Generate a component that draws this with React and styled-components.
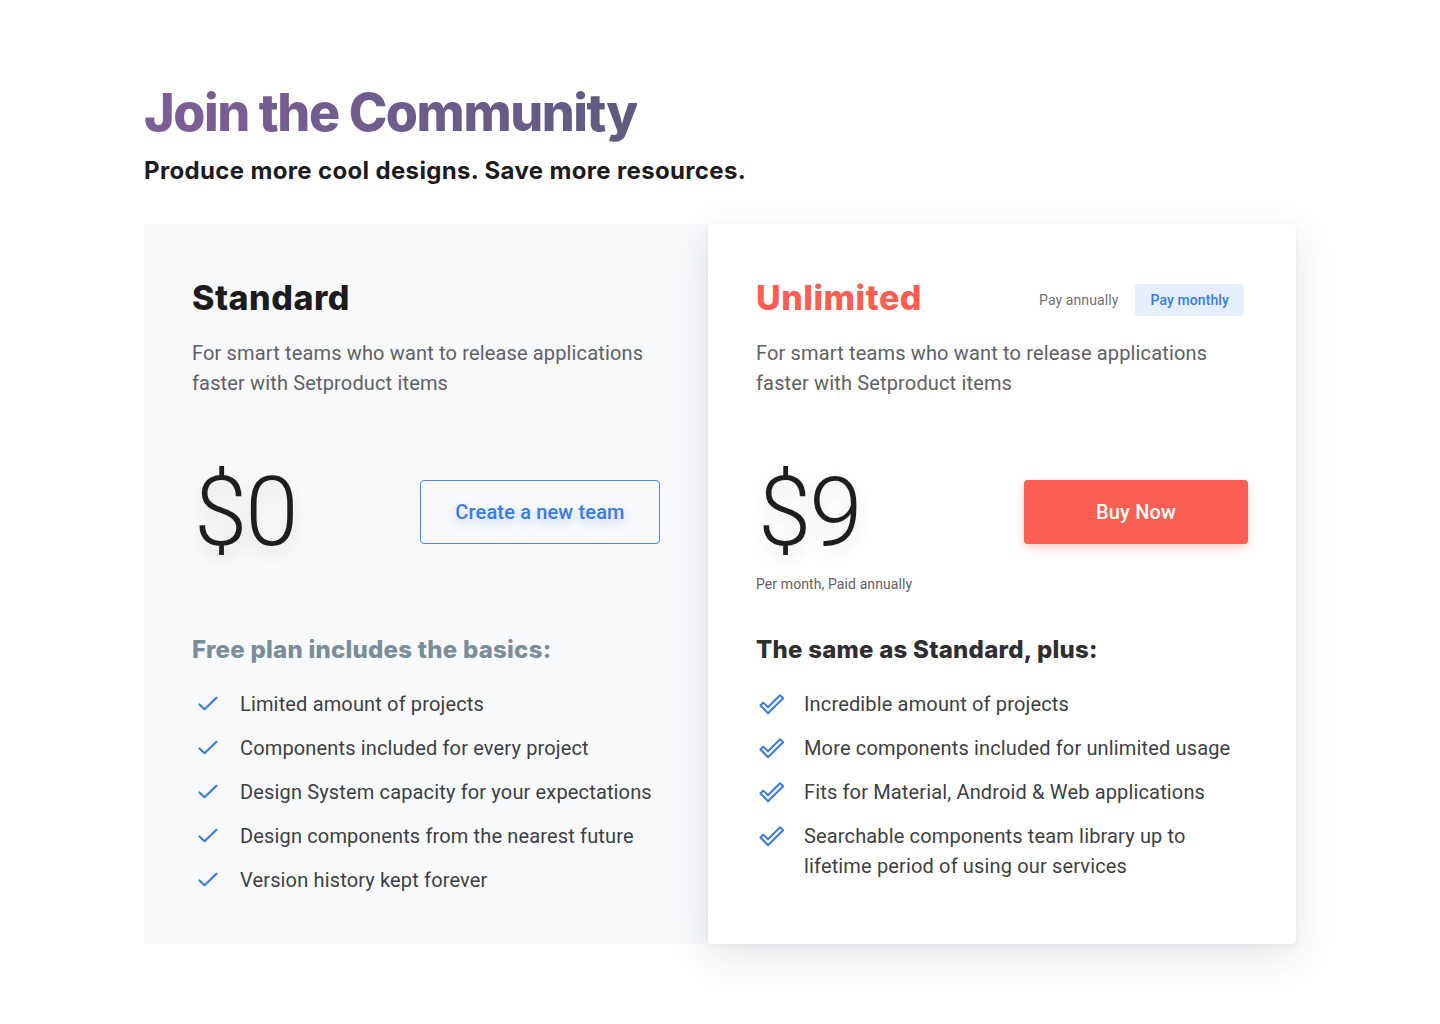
import React from "react";
import styled, { createGlobalStyle } from "styled-components";

const Global = createGlobalStyle`
  html, body { margin: 0; padding: 0; background: #ffffff; }
  body { font-family: Roboto, "Liberation Sans", sans-serif; -webkit-font-smoothing: antialiased; }
  * { box-sizing: border-box; }
`;

const HEAD = `Inter, "Open Sans", "Liberation Sans", sans-serif`;

const Page = styled.div`
  width: 1440px;
  min-height: 1024px;
  padding: 77px 144px 0 144px;
`;

const Title = styled.h1`
  margin: 0;
  font-family: ${HEAD};
  font-weight: 800;
  font-size: 52px;
  line-height: 72px;
  letter-spacing: -1.45px;
  background: linear-gradient(90deg, #7d5e97 0%, #5f5b80 100%);
  -webkit-background-clip: text;
  background-clip: text;
  color: transparent;
  display: inline-block;
`;

const Subtitle = styled.p`
  margin: 6px 0 0 0;
  font-family: ${HEAD};
  font-weight: 700;
  font-size: 24px;
  line-height: 32px;
  letter-spacing: 0.35px;
  color: #1c1c1e;
`;

const Cards = styled.div`
  display: flex;
  margin-top: 37px;
`;

const Card = styled.section`
  width: ${(p) => p.$w}px;
  height: 720px;
  padding: 50px 48px 0 48px;
  background: ${(p) => (p.$featured ? "#ffffff" : "#f7f9fb")};
  border-radius: 4px;
  box-shadow: ${(p) =>
    p.$featured ? "0 12px 40px rgba(30, 40, 60, 0.12), 0 2px 6px rgba(30,40,60,0.05)" : "none"};
  position: relative;
  z-index: ${(p) => (p.$featured ? 1 : 0)};
`;

const HeaderRow = styled.div`
  display: flex;
  align-items: center;
  justify-content: space-between;
  height: 48px;
`;

const PlanName = styled.h2`
  margin: 0;
  font-family: ${HEAD};
  font-weight: 800;
  font-size: 34px;
  line-height: 48px;
  letter-spacing: 0.5px;
  color: ${(p) => p.$color};
`;

const Toggle = styled.div`
  display: flex;
  align-items: center;
  gap: 17px;
  margin-right: 4px;
  margin-top: 4px;
`;

const ToggleOption = styled.span`
  font-family: Roboto, sans-serif;
  font-size: 14px;
  line-height: 32px;
  height: 32px;
  letter-spacing: 0.1px;
  padding: 0 ${(p) => (p.$active ? "15px" : "0")};
  border-radius: 4px;
  font-weight: ${(p) => (p.$active ? 500 : 400)};
  color: ${(p) => (p.$active ? "#3a7be0" : "#6f7378")};
  background: ${(p) => (p.$active ? "#e4eefc" : "transparent")};
`;

const Description = styled.p`
  margin: 16px 0 0 0;
  font-size: 20px;
  line-height: 30px;
  letter-spacing: 0.15px;
  color: #5f6166;
  font-weight: 400;
`;

const PriceBlock = styled.div`
  margin-top: 82px;
  height: 114px;
`;

const PriceRow = styled.div`
  display: flex;
  align-items: center;
  justify-content: space-between;
  height: 64px;
`;

const Price = styled.div`
  font-family: Roboto, sans-serif;
  font-weight: 300;
  font-size: 96px;
  line-height: 64px;
  color: #1e1e1e;
  letter-spacing: -2px;
  margin-left: 2px;
  text-shadow: 0 8px 18px rgba(0, 0, 0, 0.12);
`;

const OutlineButton = styled.button`
  width: 240px;
  height: 64px;
  border: 1px solid #4a84e2;
  border-radius: 4px;
  background: transparent;
  font-family: Roboto, sans-serif;
  font-weight: 500;
  font-size: 20px;
  letter-spacing: 0.15px;
  color: #3a7be0;
  text-shadow: 0 4px 10px rgba(58, 123, 224, 0.3);
`;

const SolidButton = styled.button`
  width: 224px;
  height: 64px;
  border: none;
  border-radius: 4px;
  background: #fa5d51;
  font-family: Roboto, sans-serif;
  font-weight: 500;
  font-size: 20px;
  letter-spacing: 0.15px;
  color: #ffffff;
  box-shadow: 0 4px 10px rgba(250, 93, 81, 0.3);
`;

const PriceNote = styled.div`
  margin-top: 30px;
  font-size: 14px;
  line-height: 20px;
  letter-spacing: 0.1px;
  color: #5f6166;
`;

const FeatureHeading = styled.h3`
  margin: 40px 0 0 0;
  font-family: ${HEAD};
  font-weight: 800;
  font-size: 24px;
  line-height: 32px;
  letter-spacing: 0.25px;
  color: ${(p) => p.$color};
`;

const List = styled.ul`
  list-style: none;
  margin: 23px 0 0 0;
  padding: 0;
  display: flex;
  flex-direction: column;
  gap: 14px;
`;

const Item = styled.li`
  display: flex;
  align-items: flex-start;
  font-size: 20px;
  line-height: 30px;
  letter-spacing: 0.15px;
  color: #3d3f43;
`;

const IconBox = styled.span`
  flex: 0 0 ${(p) => p.$w}px;
  height: 30px;
  display: flex;
  align-items: center;
  padding-left: ${(p) => p.$pl}px;
`;

const Check = () => (
  <svg width="20" height="16" viewBox="0 0 20 16" fill="none">
    <path d="M1.5 8.5 L6.5 13.2 L18.5 1.8" stroke="#3a7be0" strokeWidth="2.2" strokeLinecap="round" strokeLinejoin="round" />
  </svg>
);

const DoubleCheck = () => (
  <svg width="26" height="22" viewBox="0 0 26 22" fill="none">
    <path
      d="M1.5 12.5 L4.3 9.6 L9 14.2 L21 2.2 L24.2 5.2 L9 20.3 Z"
      stroke="#3a7be0"
      strokeWidth="2"
      strokeLinejoin="round"
    />
  </svg>
);

const standardItems = [
  "Limited amount of projects",
  "Components included for every project",
  "Design System capacity for your expectations",
  "Design components from the nearest future",
  "Version history kept forever",
];

const unlimitedItems = [
  "Incredible amount of projects",
  "More components included for unlimited usage",
  "Fits for Material, Android & Web applications",
  <>Searchable components team library up to<br />lifetime period of using our services</>,
];

export default function App() {
  return (
    <>
      <Global />
      <Page>
        <Title>Join the Community</Title>
        <Subtitle>Produce more cool designs. Save more resources.</Subtitle>
        <Cards>
          <Card $w={564}>
            <HeaderRow>
              <PlanName $color="#1c1c1e">Standard</PlanName>
            </HeaderRow>
            <Description>
              For smart teams who want to release applications
              <br />
              faster with Setproduct items
            </Description>
            <PriceBlock>
              <PriceRow>
                <Price>$0</Price>
                <OutlineButton>Create a new team</OutlineButton>
              </PriceRow>
            </PriceBlock>
            <FeatureHeading $color="#7a8d98">Free plan includes the basics:</FeatureHeading>
            <List>
              {standardItems.map((t, i) => (
                <Item key={i}>
                  <IconBox $w={48} $pl={6}>
                    <Check />
                  </IconBox>
                  {t}
                </Item>
              ))}
            </List>
          </Card>
          <Card $w={588} $featured>
            <HeaderRow>
              <PlanName $color="#fa5d51">Unlimited</PlanName>
              <Toggle>
                <ToggleOption>Pay annually</ToggleOption>
                <ToggleOption $active>Pay monthly</ToggleOption>
              </Toggle>
            </HeaderRow>
            <Description>
              For smart teams who want to release applications
              <br />
              faster with Setproduct items
            </Description>
            <PriceBlock>
              <PriceRow>
                <Price>$9</Price>
                <SolidButton>Buy Now</SolidButton>
              </PriceRow>
              <PriceNote>Per month, Paid annually</PriceNote>
            </PriceBlock>
            <FeatureHeading $color="#2e2e30">The same as Standard, plus:</FeatureHeading>
            <List>
              {unlimitedItems.map((t, i) => (
                <Item key={i}>
                  <IconBox $w={48} $pl={3}>
                    <DoubleCheck />
                  </IconBox>
                  <span>{t}</span>
                </Item>
              ))}
            </List>
          </Card>
        </Cards>
      </Page>
    </>
  );
}
